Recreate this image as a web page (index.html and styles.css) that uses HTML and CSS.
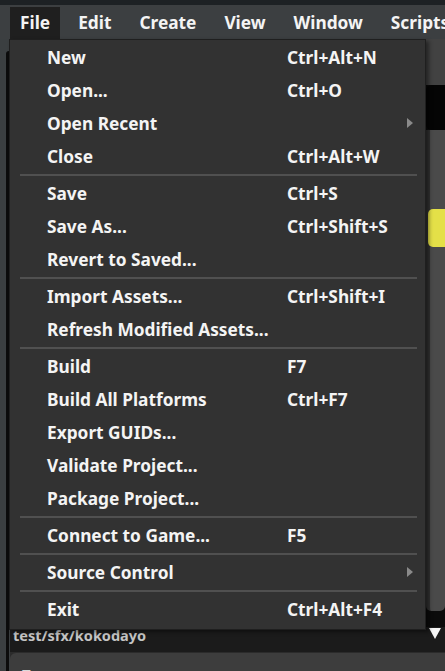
FILE: index.html
```html
<!DOCTYPE html>
<html lang="en">

<head>
    <meta charset="UTF-8">
    <meta name="viewport" content="width=device-width, initial-scale=1.0">
    <title>Editor - File menu</title>
    <link rel="stylesheet" href="styles.css">
</head>

<body>
    <div class="topstrip"></div>
    <nav class="menubar">
        <span class="menubar-item active">File</span>
        <span class="menubar-item">Edit</span>
        <span class="menubar-item">Create</span>
        <span class="menubar-item">View</span>
        <span class="menubar-item">Window</span>
        <span class="menubar-item">Scripts</span>
    </nav>

    <div class="workspace">
        <div class="sidebar">
            <div class="sidebar-edge"></div>
        </div>
        <div class="content">
            <div class="viewport">
                <div class="canvas"></div>
                <div class="rail">
                    <div class="rail-top"></div>
                    <div class="rail-box"></div>
                    <div class="rail-track">
                        <div class="rail-thumb"></div>
                    </div>
                    <div class="rail-end"></div>
                </div>
            </div>
            <div class="pathbar">
                <span class="path">test/sfx/kokodayo</span>
                <span class="path-arrow"></span>
            </div>
            <div class="panel">
                <span class="panel-title">T</span>
            </div>
        </div>
    </div>

    <!-- dropdown for "File", sits over the editor -->
    <div class="menu">
        <div class="menu-row"><span>New</span><span>Ctrl+Alt+N</span></div>
        <div class="menu-row"><span>Open...</span><span>Ctrl+O</span></div>
        <div class="menu-row sub"><span>Open Recent</span><span></span></div>
        <div class="menu-row"><span>Close</span><span>Ctrl+Alt+W</span></div>
        <div class="menu-sep"></div>
        <div class="menu-row"><span>Save</span><span>Ctrl+S</span></div>
        <div class="menu-row"><span>Save As...</span><span>Ctrl+Shift+S</span></div>
        <div class="menu-row"><span>Revert to Saved...</span><span></span></div>
        <div class="menu-sep"></div>
        <div class="menu-row"><span>Import Assets...</span><span>Ctrl+Shift+I</span></div>
        <div class="menu-row"><span>Refresh Modified Assets...</span><span></span></div>
        <div class="menu-sep"></div>
        <div class="menu-row"><span>Build</span><span>F7</span></div>
        <div class="menu-row"><span>Build All Platforms</span><span>Ctrl+F7</span></div>
        <div class="menu-row"><span>Export GUIDs...</span><span></span></div>
        <div class="menu-row"><span>Validate Project...</span><span></span></div>
        <div class="menu-row"><span>Package Project...</span><span></span></div>
        <div class="menu-sep"></div>
        <div class="menu-row"><span>Connect to Game...</span><span>F5</span></div>
        <div class="menu-sep"></div>
        <div class="menu-row sub"><span>Source Control</span><span></span></div>
        <div class="menu-sep"></div>
        <div class="menu-row"><span>Exit</span><span>Ctrl+Alt+F4</span></div>
    </div>
</body>

</html>
```

FILE: styles.css
```css
body {
    font-family: "Noto Sans", "Open Sans", sans-serif;
    font-weight: bold;
    margin: 0;
    padding: 0;
    width: 445px;
    height: 671px;
    overflow: hidden;
    display: flex;
    flex-direction: column;
    background-color: #2b2b2b;
    color: #f4f4f4;
}

.topstrip {
    height: 5px;
    flex-shrink: 0;
    background-color: #1d2124;
}

/* menu bar */
.menubar {
    height: 34px;
    flex-shrink: 0;
    display: flex;
    align-items: flex-end;
    gap: 8px;
    padding-left: 10px;
    background-color: #3c3f41;
    white-space: nowrap;
    overflow: hidden;
}

.menubar-item {
    font-size: 17.3px;
    height: 32px;
    line-height: 31px;
    padding: 0 10px;
}

.menubar-item.active {
    background-color: #1f1f1f;
}

/* editor behind the menu */
.workspace {
    flex: 1;
    min-height: 0;
    display: flex;
}

.sidebar {
    width: 10px;
    background-color: #3b3f41;
    display: flex;
}

.sidebar-edge {
    width: 3px;
    margin-left: 6px;
    margin-top: 12px;
    background-color: #0c0c0c;
    border-top-left-radius: 4px;
    flex-shrink: 0;
}

.content {
    flex: 1;
    min-height: 0;
    display: flex;
    flex-direction: column;
}

.viewport {
    height: 588px;
    flex-shrink: 0;
    display: flex;
}

.canvas {
    flex: 1;
    background-color: #3a3a3a;
}

.rail {
    width: 19px;
    display: flex;
    flex-direction: column;
    background-color: #0b0b0b;
}

.rail-top {
    height: 46px;
    background-color: #424242;
}

.rail-box {
    height: 45px;
    background-color: #050505;
    border-radius: 6px 0 0 6px;
}

.rail-track {
    height: 481px;
    background-color: #4a4a4a;
    border-left: 4px solid #333;
    border-bottom-right-radius: 5px;
    border-bottom-left-radius: 5px;
}

.rail-thumb {
    height: 38px;
    margin-top: 79px;
    margin-left: -2px;
    background-color: #e4e048;
    border-radius: 5px 0 0 5px;
}

.rail-end {
    flex: 1;
}

.pathbar {
    height: 25px;
    flex-shrink: 0;
    display: flex;
    align-items: flex-start;
    justify-content: space-between;
    padding: 0 4px 0 3px;
    background-color: #1b1b1b;
}

.path {
    font-size: 14.5px;
    line-height: 17px;
    color: #c4c4c4;
}

.path-arrow {
    width: 0;
    height: 0;
    border-left: 6px solid transparent;
    border-right: 6px solid transparent;
    border-top: 11px solid #f4f4f4;
    margin-top: 1px;
}

.panel {
    flex: 1;
    min-height: 0;
    overflow: hidden;
    margin-top: 1px;
    background-color: #3d3d3d;
    border-top-left-radius: 6px;
    padding: 10px 0 0 12px;
}

.panel-title {
    font-size: 15px;
    color: #d8d8d8;
    line-height: 20px;
}

/* File dropdown */
.menu {
    position: absolute;
    left: 9px;
    top: 39px;
    width: 415px;
    padding: 1px 0 3px;
    background-color: #323232;
    border: 1px solid #1f1f1f;
    box-shadow: 3px 2px 4px rgba(0, 0, 0, 0.45);
}

.menu-row {
    height: 33px;
    display: grid;
    grid-template-columns: 240px 1fr;
    align-items: center;
    padding-left: 37px;
    font-size: 17.3px;
    position: relative;
}

.menu-row.sub::after {
    content: "";
    position: absolute;
    right: 12px;
    top: 11px;
    border-top: 5px solid transparent;
    border-bottom: 5px solid transparent;
    border-left: 6px solid #8a8a8a;
}

.menu-sep {
    height: 2px;
    margin: 1px 8px 1px 10px;
    background-color: #505050;
}
```
